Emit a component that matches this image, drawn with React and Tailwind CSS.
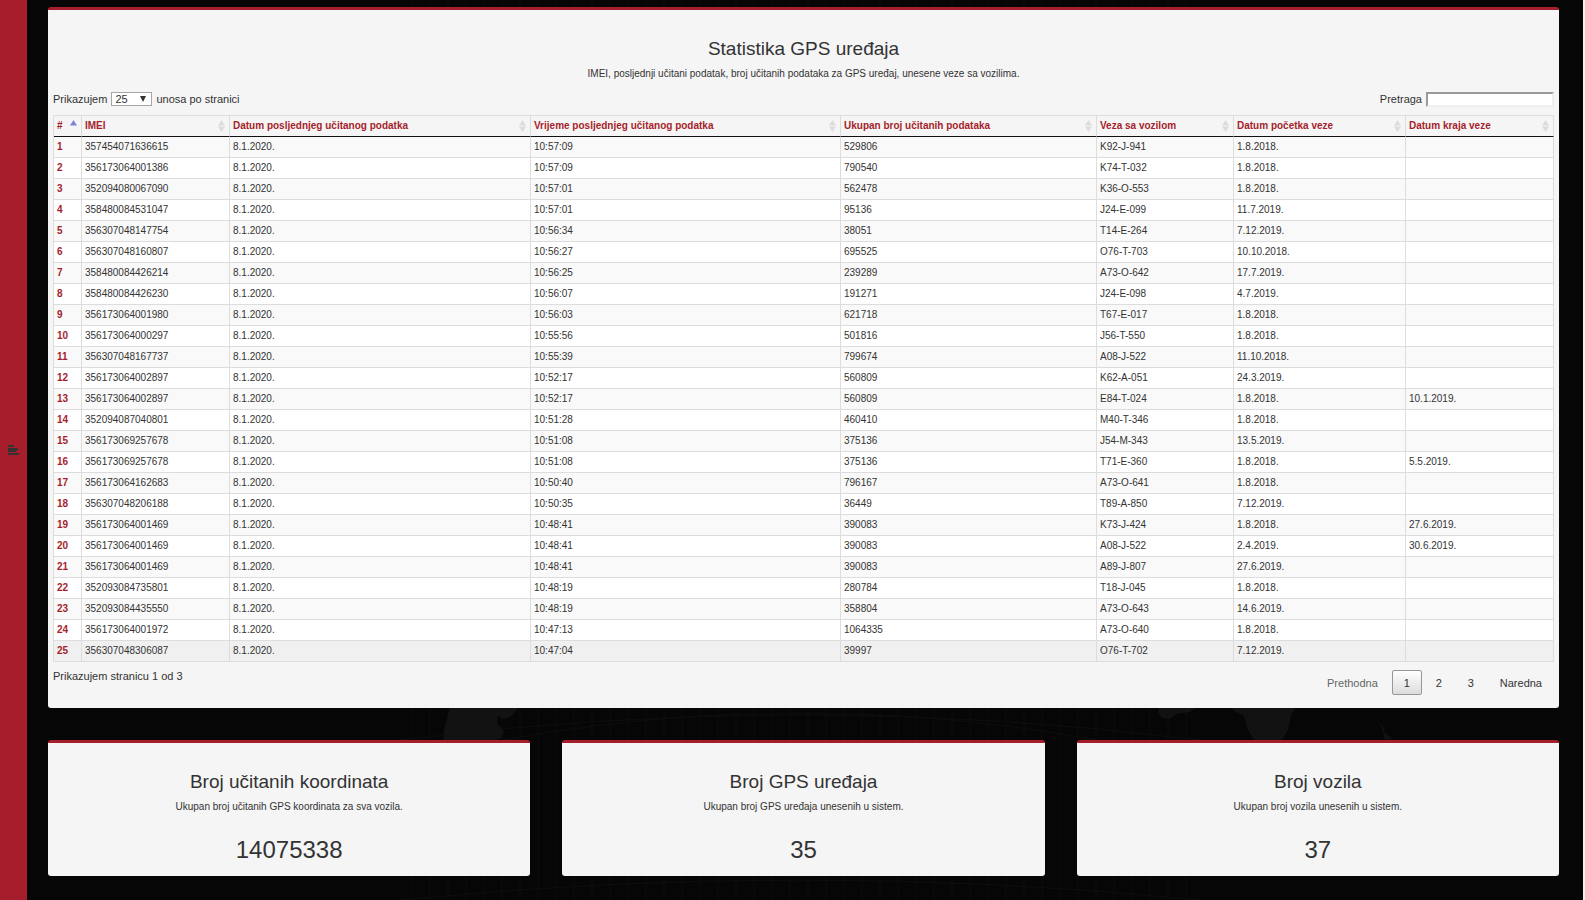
const headers = [
  { label: '#', width: 'w-[28px]' },
  { label: 'IMEI', width: 'w-[148px]' },
  { label: 'Datum posljednjeg učitanog podatka', width: 'w-[301px]' },
  { label: 'Vrijeme posljednjeg učitanog podatka', width: 'w-[310px]' },
  { label: 'Ukupan broj učitanih podataka', width: 'w-[256px]' },
  { label: 'Veza sa vozilom', width: 'w-[137px]' },
  { label: 'Datum početka veze', width: 'w-[172px]' },
  { label: 'Datum kraja veze', width: 'w-auto' },
];

const rows = [
  ['357454071636615', '10:57:09', '529806', 'K92-J-941', '1.8.2018.', ''],
  ['356173064001386', '10:57:09', '790540', 'K74-T-032', '1.8.2018.', ''],
  ['352094080067090', '10:57:01', '562478', 'K36-O-553', '1.8.2018.', ''],
  ['358480084531047', '10:57:01', '95136', 'J24-E-099', '11.7.2019.', ''],
  ['356307048147754', '10:56:34', '38051', 'T14-E-264', '7.12.2019.', ''],
  ['356307048160807', '10:56:27', '695525', 'O76-T-703', '10.10.2018.', ''],
  ['358480084426214', '10:56:25', '239289', 'A73-O-642', '17.7.2019.', ''],
  ['358480084426230', '10:56:07', '191271', 'J24-E-098', '4.7.2019.', ''],
  ['356173064001980', '10:56:03', '621718', 'T67-E-017', '1.8.2018.', ''],
  ['356173064000297', '10:55:56', '501816', 'J56-T-550', '1.8.2018.', ''],
  ['356307048167737', '10:55:39', '799674', 'A08-J-522', '11.10.2018.', ''],
  ['356173064002897', '10:52:17', '560809', 'K62-A-051', '24.3.2019.', ''],
  ['356173064002897', '10:52:17', '560809', 'E84-T-024', '1.8.2018.', '10.1.2019.'],
  ['352094087040801', '10:51:28', '460410', 'M40-T-346', '1.8.2018.', ''],
  ['356173069257678', '10:51:08', '375136', 'J54-M-343', '13.5.2019.', ''],
  ['356173069257678', '10:51:08', '375136', 'T71-E-360', '1.8.2018.', '5.5.2019.'],
  ['356173064162683', '10:50:40', '796167', 'A73-O-641', '1.8.2018.', ''],
  ['356307048206188', '10:50:35', '36449', 'T89-A-850', '7.12.2019.', ''],
  ['356173064001469', '10:48:41', '390083', 'K73-J-424', '1.8.2018.', '27.6.2019.'],
  ['356173064001469', '10:48:41', '390083', 'A08-J-522', '2.4.2019.', '30.6.2019.'],
  ['356173064001469', '10:48:41', '390083', 'A89-J-807', '27.6.2019.', ''],
  ['352093084735801', '10:48:19', '280784', 'T18-J-045', '1.8.2018.', ''],
  ['352093084435550', '10:48:19', '358804', 'A73-O-643', '14.6.2019.', ''],
  ['356173064001972', '10:47:13', '1064335', 'A73-O-640', '1.8.2018.', ''],
  ['356307048306087', '10:47:04', '39997', 'O76-T-702', '7.12.2019.', ''],
];

const highlightedRow = 24;

const stats = [
  { title: 'Broj učitanih koordinata', text: 'Ukupan broj učitanih GPS koordinata za sva vozila.', value: '14075338' },
  { title: 'Broj GPS uređaja', text: 'Ukupan broj GPS uređaja unesenih u sistem.', value: '35' },
  { title: 'Broj vozila', text: 'Ukupan broj vozila unesenih u sistem.', value: '37' },
];

function rowColor(index) {
  if (index === highlightedRow) return 'bg-[#f0f0f0]';
  return index % 2 === 0 ? 'bg-[#f9f9f9]' : 'bg-white';
}

function SortIcon({ ascending }) {
  return (
    <svg width="7" height="12" viewBox="0 0 7 12" className="shrink-0" aria-hidden="true">
      {ascending ? (
        <path d="M3.5 0 7 5.5H0z" fill="#7b84dc" />
      ) : (
        <path d="M3.5 0 7 5.5H0zM0 6.5h7L3.5 12z" fill="#dcdcdc" />
      )}
    </svg>
  );
}

function Backdrop() {
  const meridians = Array.from({ length: 72 }, (_, i) => 160 + i * 18);
  return (
    <svg
      className="pointer-events-none absolute inset-0 h-full w-full"
      viewBox="27 0 1556 900"
      preserveAspectRatio="none"
      aria-hidden="true"
    >
      <g stroke="#0e0e0e" strokeWidth="1" fill="none">
        {meridians.map((x) => (
          <path key={x} d={`M${x} 0V900`} opacity={x > 400 && x < 1200 ? 0.9 : 0.4} />
        ))}
        <path d="M400 762Q800 664 1200 762M400 740Q800 690 1200 740M400 900Q800 860 1200 900" />
      </g>
      <g fill="#121212">
        <path d="M452 700h68l-3 10-7 7-7 2-5-3-1 7 4 5 3 4-3 6-8 4H443l1-12z" />
        <path d="M1158 706h40l-8 6-14 2-6 5-8-1-3-4zM1228 706h68l-5 10-3 14-6 10h-28l-6-10-4-14-8-4-4-4z" />
        <path d="M1378 719l5 8 2 6 8 6-8 1-3-12z" />
      </g>
    </svg>
  );
}

function Panel({ children, className }) {
  return (
    <section className={`rounded-[3px] border-t-[3px] border-[#a61e2b] bg-[#f5f5f5] ${className}`}>
      {children}
    </section>
  );
}

export default function App() {
  return (
    <div className="flex min-h-screen bg-[#060606] font-['Liberation_Sans',Arial,sans-serif] text-[11px] leading-4 text-[#333333]">
      <aside className="flex w-[27px] shrink-0 items-center justify-center bg-[#a61e2b]">
        <button type="button" aria-label="Meni">
          <svg width="11" height="10" viewBox="0 0 11 10" aria-hidden="true">
            <path d="M0 0h6v2H0zM0 3h10v2H9v1H8v1H0zM0 8h11v2H0z" fill="#333333" />
          </svg>
        </button>
      </aside>

      <main className="relative min-w-0 flex-1 border-r-2 border-[#f1f1f1] pt-[7px] pr-6 pl-[21px]">
        <Backdrop />
        <div className="relative flex flex-col gap-8 pb-6">
          <Panel className="px-[5px] pb-[13px]">
            <header className="pt-[25px] text-center">
              <h1 className="text-[19px] leading-7">Statistika GPS uređaja</h1>
              <p className="mt-[3px] text-[10px] leading-4">
                IMEI, posljednji učitani podatak, broj učitanih podataka za GPS uređaj, unesene veze sa vozilima.
              </p>
            </header>

            <div className="mt-[9px] flex items-center justify-between">
              <div className="flex items-center gap-1">
                <label htmlFor="page-size">Prikazujem</label>
                <span className="relative flex">
                  <select
                    id="page-size"
                    defaultValue="25"
                    className="h-[14px] w-[41px] appearance-none border border-[#a6a6a6] bg-white pl-[3px] text-[11px] leading-3"
                  >
                    <option>10</option>
                    <option>25</option>
                    <option>50</option>
                  </select>
                  <svg width="6" height="6" viewBox="0 0 6 6" className="pointer-events-none absolute top-1 right-[6px]" aria-hidden="true">
                    <path d="M0 0h6L3 6z" fill="#333333" />
                  </svg>
                </span>
                <label htmlFor="page-size">unosa po stranici</label>
              </div>
              <div className="flex items-center gap-1">
                <label htmlFor="search">Pretraga</label>
                <input
                  id="search"
                  type="search"
                  className="h-[15px] w-32 border-2 border-t-[#9a9a9a] border-r-[#eeeeee] border-b-[#eeeeee] border-l-[#9a9a9a] bg-white"
                />
              </div>
            </div>

            <table className="mt-2 w-full table-fixed border-separate border-spacing-0 border-t border-l border-[#dddddd] text-left text-[10px] leading-3">
              <thead>
                <tr className="text-[#a61e2b]">
                  {headers.map((header, i) => (
                    <th
                      key={header.label}
                      scope="col"
                      aria-sort={i === 0 ? 'ascending' : 'none'}
                      className={`${header.width} h-[21px] border-r border-b border-r-[#dddddd] border-b-[#111111] pr-1 pl-[3px] font-bold`}
                    >
                      <span className={`flex justify-between ${i === 0 ? 'items-start' : 'items-center'}`}>
                        {header.label}
                        <SortIcon ascending={i === 0} />
                      </span>
                    </th>
                  ))}
                </tr>
              </thead>
              <tbody>
                {rows.map(([imei, time, count, vehicle, start, end], i) => (
                  <tr key={i} className={rowColor(i)}>
                    <th scope="row" className="h-[21px] border-r border-b border-[#dddddd] px-[3px] font-bold text-[#a61e2b]">
                      {i + 1}
                    </th>
                    {[imei, '8.1.2020.', time, count, vehicle, start, end].map((value, j) => (
                      <td key={j} className="border-r border-b border-[#dddddd] px-[3px]">
                        {value}
                      </td>
                    ))}
                  </tr>
                ))}
              </tbody>
            </table>

            <div className="flex items-start justify-between pt-[6px]">
              <p>Prikazujem stranicu 1 od 3</p>
              <nav aria-label="Stranice" className="mt-[2px] flex h-[25px] items-stretch gap-[2px]">
                <button type="button" disabled className="px-3 text-[#666666]">Prethodna</button>
                <button
                  type="button"
                  aria-current="page"
                  className="w-[30px] rounded-[2px] border border-[#979797] bg-linear-to-b from-white to-[#dcdcdc]"
                >
                  1
                </button>
                <button type="button" className="w-[30px]">2</button>
                <button type="button" className="w-[30px]">3</button>
                <button type="button" className="px-3">Naredna</button>
              </nav>
            </div>
          </Panel>

          <div className="grid grid-cols-3 gap-8">
            {stats.map((stat) => (
              <Panel key={stat.title} className="pt-[25px] pb-[10px] text-center">
                <h2 className="text-[19px] leading-7">{stat.title}</h2>
                <p className="mt-[3px] text-[10px] leading-4">{stat.text}</p>
                <p className="mt-[19px] text-[24px] leading-8">{stat.value}</p>
              </Panel>
            ))}
          </div>
        </div>
      </main>
    </div>
  );
}
